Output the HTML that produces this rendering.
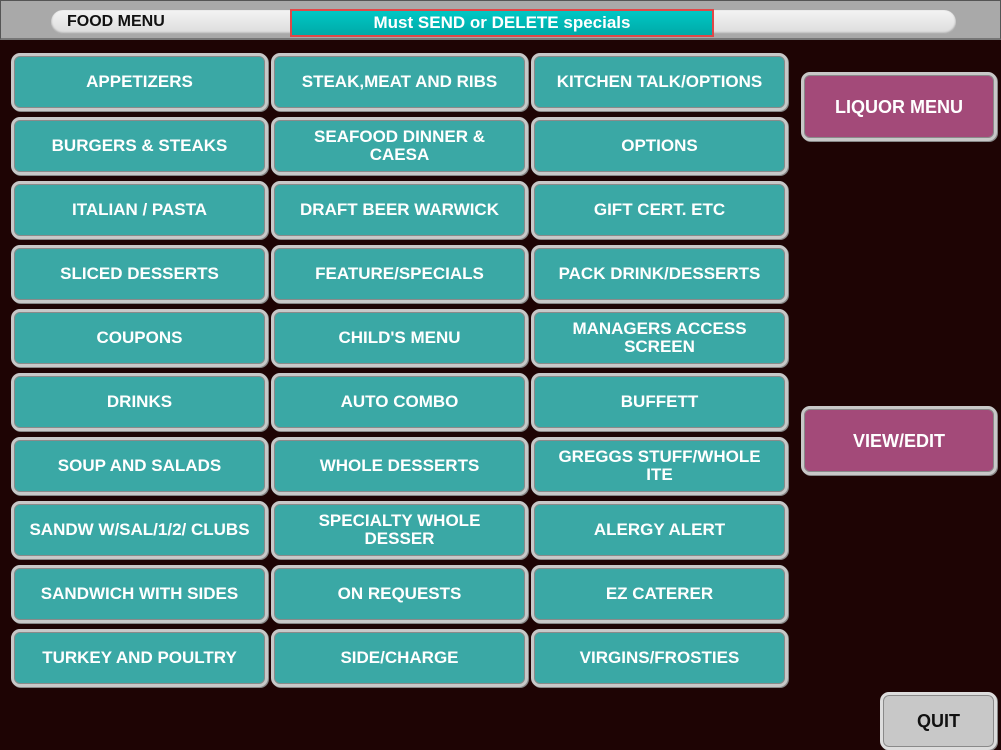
<!DOCTYPE html>
<html><head><style>
body{margin:0;width:1001px;height:748px;background:#1e0404;position:relative;overflow:hidden;font-family:"Liberation Sans",Arial,sans-serif}
.top{position:absolute;left:0;top:0;width:999px;height:37px;background:#a9a9a9;border:1px solid #555;border-bottom:2px solid #777}
.pill{position:absolute;left:50px;top:9px;width:905px;height:24px;border-radius:12px;background:linear-gradient(#f4f4f4,#dcdcdc);box-shadow:inset 0 -1px 2px #999}
.pill span{position:absolute;left:16px;top:3px;font-size:16px;font-weight:bold;color:#111}
.ban{position:absolute;left:289px;top:8px;width:420px;height:24px;border:2px solid #e04848;background:linear-gradient(#00c7c4,#00aaa8);color:#fff;font-weight:bold;font-size:17px;text-align:center;line-height:24px}
.b{position:absolute;box-sizing:border-box;width:257px;height:58px;border:3px solid #c8c8c8;border-radius:9px;background:#3aa8a5;color:#fff;font-weight:bold;font-size:17px;display:flex;align-items:center;justify-content:center;text-align:center;line-height:18px;box-shadow:1px 1px 0 #888,inset 0 0 0 1px #8a8a8a}
.m{background:#a34a79;width:196px;height:69px;font-size:18px}
.q{background:#c8c8c8;color:#111;width:117px;height:58px;border-color:#ddd;font-size:18px}
</style></head><body>
<div class="top"><div class="pill"><span>FOOD MENU</span></div><div class="ban">Must SEND or DELETE specials</div></div>
<div class="b" style="left:11px;top:53px">APPETIZERS</div>
<div class="b" style="left:271px;top:53px">STEAK,MEAT AND RIBS</div>
<div class="b" style="left:531px;top:53px">KITCHEN TALK/OPTIONS</div>
<div class="b" style="left:11px;top:117px">BURGERS &amp; STEAKS</div>
<div class="b" style="left:271px;top:117px">SEAFOOD DINNER &amp;<br>CAESA</div>
<div class="b" style="left:531px;top:117px">OPTIONS</div>
<div class="b" style="left:11px;top:181px">ITALIAN / PASTA</div>
<div class="b" style="left:271px;top:181px">DRAFT BEER WARWICK</div>
<div class="b" style="left:531px;top:181px">GIFT CERT. ETC</div>
<div class="b" style="left:11px;top:245px">SLICED DESSERTS</div>
<div class="b" style="left:271px;top:245px">FEATURE/SPECIALS</div>
<div class="b" style="left:531px;top:245px">PACK DRINK/DESSERTS</div>
<div class="b" style="left:11px;top:309px">COUPONS</div>
<div class="b" style="left:271px;top:309px">CHILD'S MENU</div>
<div class="b" style="left:531px;top:309px">MANAGERS ACCESS<br>SCREEN</div>
<div class="b" style="left:11px;top:373px">DRINKS</div>
<div class="b" style="left:271px;top:373px">AUTO COMBO</div>
<div class="b" style="left:531px;top:373px">BUFFETT</div>
<div class="b" style="left:11px;top:437px">SOUP AND SALADS</div>
<div class="b" style="left:271px;top:437px">WHOLE DESSERTS</div>
<div class="b" style="left:531px;top:437px">GREGGS STUFF/WHOLE<br>ITE</div>
<div class="b" style="left:11px;top:501px">SANDW W/SAL/1/2/ CLUBS</div>
<div class="b" style="left:271px;top:501px">SPECIALTY WHOLE<br>DESSER</div>
<div class="b" style="left:531px;top:501px">ALERGY ALERT</div>
<div class="b" style="left:11px;top:565px">SANDWICH WITH SIDES</div>
<div class="b" style="left:271px;top:565px">ON REQUESTS</div>
<div class="b" style="left:531px;top:565px">EZ CATERER</div>
<div class="b" style="left:11px;top:629px">TURKEY AND POULTRY</div>
<div class="b" style="left:271px;top:629px">SIDE/CHARGE</div>
<div class="b" style="left:531px;top:629px">VIRGINS/FROSTIES</div>
<div class="b m" style="left:801px;top:72px">LIQUOR MENU</div>
<div class="b m" style="left:801px;top:406px">VIEW/EDIT</div>
<div class="b q" style="left:880px;top:692px">QUIT</div>
</body></html>
